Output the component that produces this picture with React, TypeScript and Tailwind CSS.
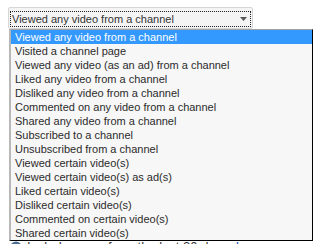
const options = [
  'Viewed any video from a channel',
  'Visited a channel page',
  'Viewed any video (as an ad) from a channel',
  'Liked any video from a channel',
  'Disliked any video from a channel',
  'Commented on any video from a channel',
  'Shared any video from a channel',
  'Subscribed to a channel',
  'Unsubscribed from a channel',
  'Viewed certain video(s)',
  'Viewed certain video(s) as ad(s)',
  'Liked certain video(s)',
  'Disliked certain video(s)',
  'Commented on certain video(s)',
  'Shared certain video(s)',
]

const App = () => {
  const selected = 0

  return (
    <div className="relative w-[319px] h-[244px] overflow-hidden bg-white font-['Liberation_Sans',Arial,sans-serif] text-[#333]">
      <div className="pl-2 pt-[7px]">
        <div className="relative w-[245px]">
          {/* select box */}
          <div className="h-[22px] rounded-[2px] border border-[#d6d6d6] bg-[#f4f4f4]">
            <div className="mx-px mt-[3px] flex h-[16px] items-center justify-between border border-dotted border-[#222] pl-px pr-[3px]">
              <span className="text-[11px] leading-none">{options[selected]}</span>
              <svg width="7" height="4" viewBox="0 0 7 4" className="mb-px">
                <polygon points="0,0 7,0 3.5,4" fill="#555" />
              </svg>
            </div>
          </div>

          {/* open dropdown list */}
          <ul className="absolute left-px top-[22px] z-10 w-[304px] border-t border-l-2 border-r border-b border-t-[#a3a3a3] border-l-[#b8b8b8] border-r-black border-b-black bg-[#f7f7f7]">
            {options.map((opt, i) => (
              <li
                key={opt}
                className={`flex h-[14px] items-center pl-1 text-[11px] leading-none whitespace-nowrap ${
                  i === selected ? 'bg-[#3399ff] text-white' : 'text-[#2b2b2b]'
                }`}
              >
                {opt}
              </li>
            ))}
          </ul>
        </div>

        {/* content hidden behind the dropdown */}
        <div className="ml-[2px] mt-[210px] flex items-center gap-[5px] text-[13px] leading-[15px]">
          <svg width="12" height="12" viewBox="0 0 12 12">
            <circle cx="6" cy="6" r="5.5" fill="#4d6a94" />
            <circle cx="6" cy="6" r="2.5" fill="#dfe8f5" />
          </svg>
          <span>
            Include users from the last 30 days.{' '}
            <span className="text-[#1a55c8]">Learn more</span>
          </span>
        </div>
      </div>
    </div>
  )
}

export default App
